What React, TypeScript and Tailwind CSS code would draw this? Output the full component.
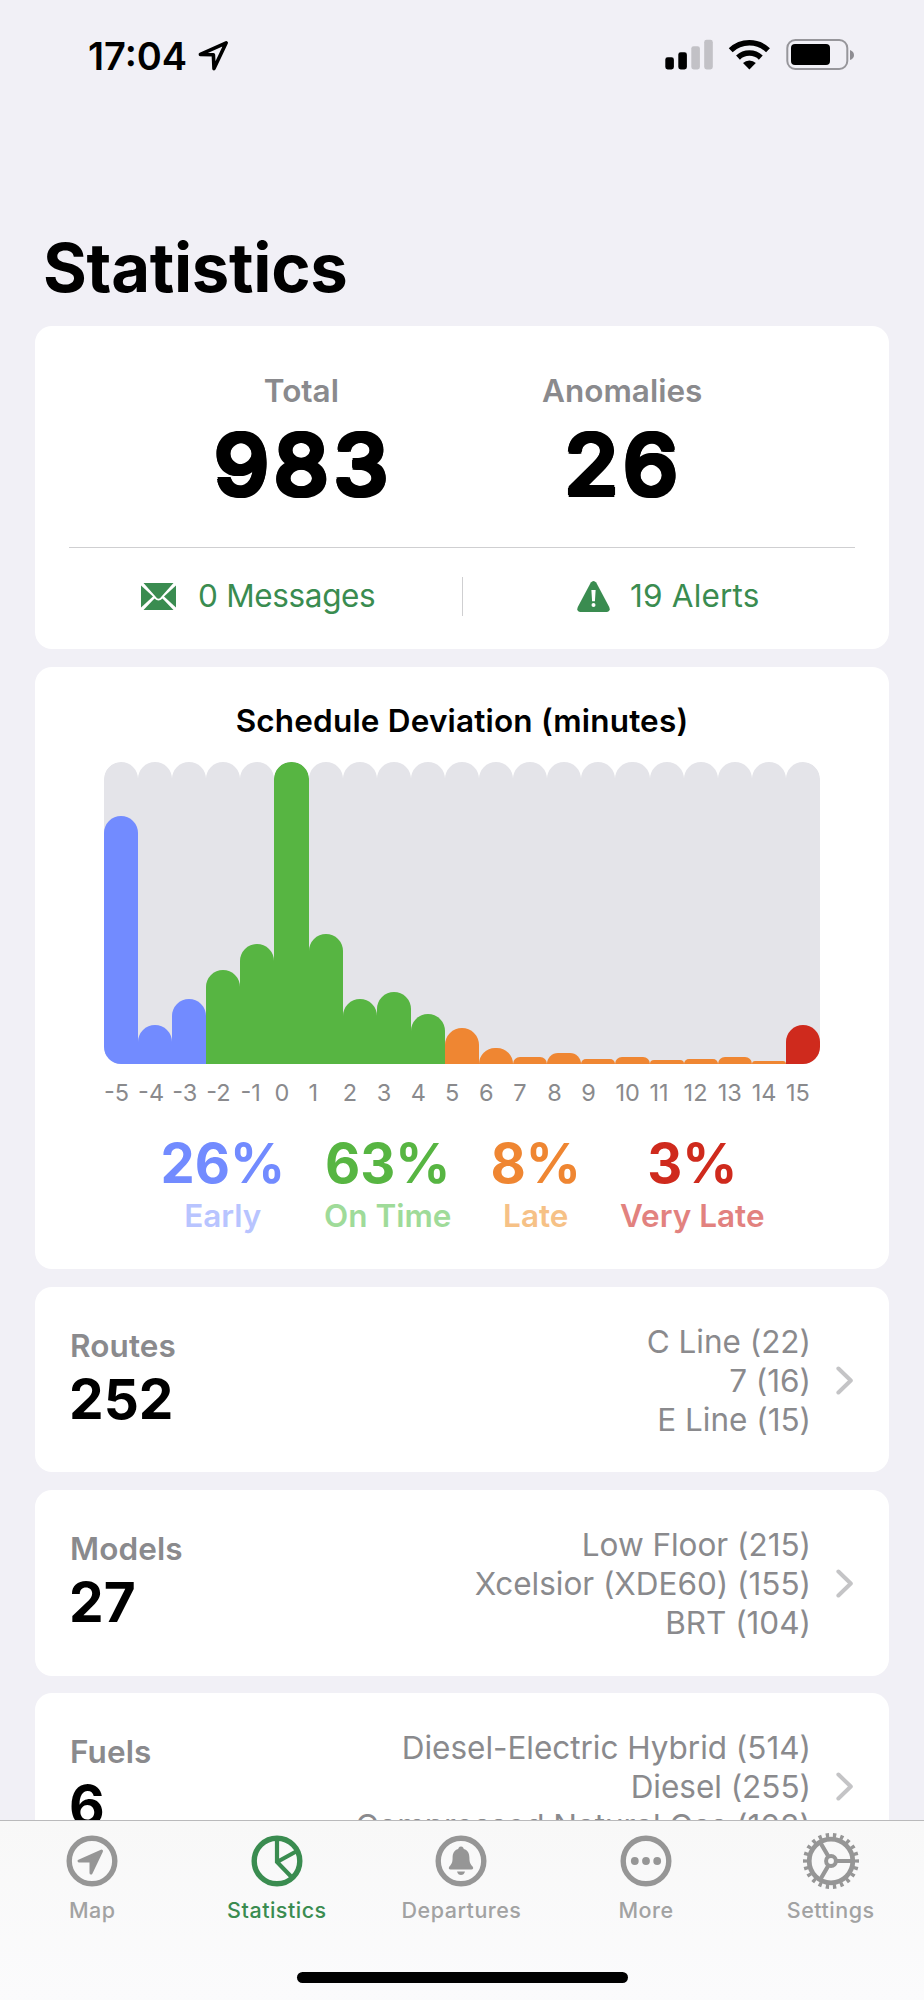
import type { ReactNode } from 'react';

type Bar = { label: string; height: number; color: string };

const EARLY = 'bg-[#728bff]';
const ON_TIME = 'bg-[#57b542]';
const LATE = 'bg-[#ef8632]';
const VERY_LATE = 'bg-[#cf2a1d]';

const bars: Bar[] = [
	{ label: '-5', height: 248, color: EARLY },
	{ label: '-4', height: 39, color: EARLY },
	{ label: '-3', height: 65, color: EARLY },
	{ label: '-2', height: 94, color: ON_TIME },
	{ label: '-1', height: 120, color: ON_TIME },
	{ label: '0', height: 302, color: ON_TIME },
	{ label: '1', height: 130, color: ON_TIME },
	{ label: '2', height: 65, color: ON_TIME },
	{ label: '3', height: 72, color: ON_TIME },
	{ label: '4', height: 50, color: ON_TIME },
	{ label: '5', height: 36, color: LATE },
	{ label: '6', height: 15.7, color: LATE },
	{ label: '7', height: 6.7, color: LATE },
	{ label: '8', height: 11.3, color: LATE },
	{ label: '9', height: 5.3, color: LATE },
	{ label: '10', height: 6.7, color: LATE },
	{ label: '11', height: 4, color: LATE },
	{ label: '12', height: 5.3, color: LATE },
	{ label: '13', height: 6.7, color: LATE },
	{ label: '14', height: 2.7, color: LATE },
	{ label: '15', height: 39, color: VERY_LATE },
];

const lists = [
	{
		title: 'Routes',
		count: '252',
		items: ['C Line (22)', '7 (16)', 'E Line (15)'],
	},
	{
		title: 'Models',
		count: '27',
		items: ['Low Floor (215)', 'Xcelsior (XDE60) (155)', 'BRT (104)'],
	},
	{
		title: 'Fuels',
		count: '6',
		items: [
			'Diesel-Electric Hybrid (514)',
			'Diesel (255)',
			'Compressed Natural Gas (108)',
		],
	},
];

function StatusBar() {
	return (
		<div className="flex h-[110px] shrink-0 items-start justify-between pl-[88px] pr-[69px]">
			<div className="flex items-start">
				<span className="mt-[32px] text-[38px] leading-[48px] font-semibold">
					17:04
				</span>
				<svg
					className="mt-[40px] ml-[11px] h-[31px] w-[31px]"
					viewBox="0 0 31 31"
					fill="none"
					stroke="currentColor"
					strokeWidth="3.6"
					strokeLinejoin="round"
				>
					<path d="M28.2 2.8L2.4 14.4L15.4 14.8L16 28.6Z" />
				</svg>
			</div>
			<svg
				className="mt-[38px] h-[34px] w-[190px]"
				viewBox="665 38 190 34"
			>
				<rect x="665.3" y="57.3" width="8.6" height="12.2" rx="2.4" />
				<rect x="678.3" y="52.3" width="8.6" height="17.2" rx="2.4" />
				<rect x="691.3" y="46.2" width="8.6" height="23.3" rx="2.4" fill="#c2c1c6" />
				<rect x="704.2" y="39.8" width="8.6" height="29.7" rx="2.4" fill="#c2c1c6" />
				<path
					d="M730.7 50.2A27 27 0 0 1 768 50.2"
					fill="none"
					stroke="#000"
					strokeWidth="5.6"
				/>
				<path
					d="M738 57.6A16.6 16.6 0 0 1 760.8 57.6"
					fill="none"
					stroke="#000"
					strokeWidth="5.6"
				/>
				<path d="M749.4 69.4L743 63A9.2 9.2 0 0 1 755.8 63Z" />
				<rect
					x="787.3"
					y="40"
					width="60"
					height="29"
					rx="8"
					fill="none"
					stroke="#97969b"
					strokeWidth="2"
				/>
				<rect x="791" y="44" width="39" height="21" rx="4" />
				<path d="M850 50Q854 51.5 854 55T850 60Z" fill="#8e8d92" />
			</svg>
		</div>
	);
}

function Total({ label, value }: { label: string; value: string }) {
	return (
		<div className="flex flex-col items-center">
			<span className="pr-[3px] text-[31.5px] leading-[40px] font-semibold text-[#8a8a8d]">
				{label}
			</span>
			<span className="mt-[4px] scale-x-[1.05] text-[84px] leading-[100px] font-medium tracking-[4px] [text-shadow:2.2px_0_0_#000,-2.2px_0_0_#000,0_2.2px_0_#000,0_-2.2px_0_#000,1.6px_1.6px_0_#000,-1.6px_1.6px_0_#000,1.6px_-1.6px_0_#000,-1.6px_-1.6px_0_#000]">
				{value}
			</span>
		</div>
	);
}

function TotalsCard() {
	return (
		<div className="h-[323.3px] shrink-0 rounded-[17px] bg-white px-[34px]">
			<div className="flex h-[221px] justify-center gap-[154px] pt-[45px] pr-px">
				<Total label="Total" value="983" />
				<Total label="Anomalies" value="26" />
			</div>
			<div className="grid h-[102px] grid-cols-[1fr_1px_1fr] items-center border-t border-[#cfcfd1] pb-[5px] text-[#3a8c50]">
				<div className="flex items-center justify-center pr-[14px]">
					<svg className="h-[27px] w-[35px]" viewBox="0 0 35 27" fill="currentColor">
						<path d="M2.5 0H32.5L20.5 13.5Q17.5 18 14.5 13.5Z" />
						<path d="M0 2.5L12 13.5L0 24.5Z" />
						<path d="M35 2.5L23 13.5L35 24.5Z" />
						<path d="M2.5 27L13.5 15.6Q17.5 19.5 21.5 15.6L32.5 27Z" />
					</svg>
					<span className="ml-[22px] text-[31.5px] leading-[40px] tracking-[-0.35px]">
						0 Messages
					</span>
				</div>
				<div className="h-[39px] bg-[#cfcfd1]"></div>
				<div className="flex items-center justify-center pl-[19px]">
					<svg className="h-[31px] w-[33px]" viewBox="0 0 33 31">
						<path
							d="M13.8 1.6Q16.5 -1.4 19.2 1.6L32.2 26Q34 30.4 29.6 31H3.4Q-1 30.4 .8 26Z"
							fill="currentColor"
						/>
						<path d="M14.4 9H18.6L17.9 20.3H15.1Z" fill="#fff" />
						<circle cx="16.5" cy="24" r="2" fill="#fff" />
					</svg>
					<span className="ml-[20px] text-[31.5px] leading-[40px] tracking-[0.2px]">
						19 Alerts
					</span>
				</div>
			</div>
		</div>
	);
}

function Share({
	value,
	label,
	valueColor,
	labelColor,
}: {
	value: string;
	label: string;
	valueColor: string;
	labelColor: string;
}) {
	return (
		<div className="flex flex-col items-center">
			<span className={`text-[54.3px] leading-[64px] font-bold ${valueColor}`}>
				{value}
			</span>
			<span className={`mt-px text-[31.5px] leading-[40px] font-semibold ${labelColor}`}>
				{label}
			</span>
		</div>
	);
}

function DeviationCard() {
	return (
		<div className="flex h-[602.6px] shrink-0 flex-col items-center rounded-[17px] bg-white pt-[34px]">
			<h2 className="text-[31.5px] leading-[40px] font-semibold tracking-[0.18px]">
				Schedule Deviation (minutes)
			</h2>
			<div className="mt-[21px] flex h-[302px] w-[716px] overflow-hidden rounded-[17px]">
				{bars.map((bar) => (
					<div
						key={bar.label}
						className="flex flex-1 items-end overflow-hidden rounded-t-[17px] bg-[#e4e4e9]"
					>
						<div
							className={`w-full rounded-t-[17px] ${bar.color}`}
							style={{ height: bar.height }}
						></div>
					</div>
				))}
			</div>
			<div className="mt-[14px] flex w-[716px] text-[23.5px] leading-[30px] text-[#8a8a8d]">
				{bars.map((bar) => (
					<span key={bar.label} className="w-0 flex-1 whitespace-nowrap">
						{bar.label}
					</span>
				))}
			</div>
			<div className="mt-[23px] flex gap-[39px] pl-px">
				<Share
					value="26%"
					label="Early"
					valueColor="text-[#728bff]"
					labelColor="text-[#b8c4ff]"
				/>
				<Share
					value="63%"
					label="On Time"
					valueColor="text-[#57b542]"
					labelColor="text-[#9fdb99]"
				/>
				<Share
					value="8%"
					label="Late"
					valueColor="text-[#ef8632]"
					labelColor="text-[#f6c186]"
				/>
				<Share
					value="3%"
					label="Very Late"
					valueColor="text-[#cf2a1d]"
					labelColor="text-[#e2827f]"
				/>
			</div>
		</div>
	);
}

function ListCard({
	title,
	count,
	items,
}: {
	title: string;
	count: string;
	items: string[];
}) {
	return (
		<div className="flex h-[185.6px] shrink-0 rounded-[17px] bg-white pr-[35px] pl-[34px]">
			<div className="flex flex-col pt-[39px]">
				<span className="pl-px text-[31.5px] leading-[40px] font-semibold tracking-[0.1px] text-[#8a8a8d]">
					{title}
				</span>
				<span className="text-[55px] leading-[66px] font-bold">{count}</span>
			</div>
			<div className="ml-auto pt-[35.4px] text-right text-[31.5px] leading-[39px] tracking-[-0.03px] text-[#8a8a8d]">
				{items.map((item) => (
					<div key={item}>{item}</div>
				))}
			</div>
			<svg
				className="mt-[79px] ml-[25px] h-[29px] w-[18px]"
				viewBox="0 0 18 29"
				fill="none"
				stroke="#c4c4c6"
				strokeWidth="4"
				strokeLinecap="round"
				strokeLinejoin="round"
			>
				<path d="M2.4 2.5L14.8 14.5L2.4 26.5" />
			</svg>
		</div>
	);
}

function Tab({
	label,
	active = false,
	children,
}: {
	label: string;
	active?: boolean;
	children: ReactNode;
}) {
	return (
		<div
			className={`flex flex-1 flex-col items-center ${active ? 'text-[#3a8c50]' : 'text-[#969696]'}`}
		>
			<svg
				className="mt-[11px] h-[58px] w-[58px]"
				viewBox="-29 -29 58 58"
				fill="none"
				stroke="currentColor"
			>
				{children}
			</svg>
			<span
				className={`mt-[6px] text-[21.5px] leading-[28px] font-medium tracking-[0.5px] ${active ? '' : 'text-[#a2a2a2]'}`}
			>
				{label}
			</span>
		</div>
	);
}

function Ring() {
	return <circle r="22.8" strokeWidth="5.4" />;
}

function TabBar() {
	return (
		<div className="h-[180px] w-full shrink-0 border-t border-[#b9b9bb] bg-linear-to-b from-[#f8f8f8] to-[#fbfbfc]">
			<div className="flex h-[151px] w-[923px]">
				<Tab label="Map">
					<Ring />
					<path
						d="M9.5 -10L-13 0H-1V12Z"
						fill="currentColor"
						strokeWidth="3"
						strokeLinejoin="round"
					/>
				</Tab>
				<Tab label="Statistics" active>
					<Ring />
					<path d="M0 -22V1L16 17.5M0 1L20 -10" strokeWidth="4.2" />
				</Tab>
				<Tab label="Departures">
					<Ring />
					<path
						d="M0 -14.5C-2 -14.5 -2.6 -13 -2.8 -12C-7 -10.8 -8.4 -7.4 -8.4 -3.4C-8.4 2 -9.6 3.4 -11.6 5.6C-12.8 7.2 -12.2 8.6 -10.4 8.6H10.4C12.2 8.6 12.8 7.2 11.6 5.6C9.6 3.4 8.4 2 8.4 -3.4C8.4 -7.4 7 -10.8 2.8 -12C2.6 -13 2 -14.5 0 -14.5ZM-4 10.5H4Q3 14 0 14T-4 10.5Z"
						fill="currentColor"
						stroke="none"
					/>
				</Tab>
				<Tab label="More">
					<Ring />
					<g fill="currentColor" stroke="none">
						<circle cx="-11.2" r="3.9" />
						<circle r="3.9" />
						<circle cx="11.2" r="3.9" />
					</g>
				</Tab>
				<Tab label="Settings">
					<circle r="21.8" strokeWidth="4.8" />
					<circle
						r="25.8"
						strokeWidth="4.4"
						pathLength="220"
						strokeDasharray="4.6 5.4"
						strokeDashoffset="2.3"
					/>
					<circle r="4.9" strokeWidth="4" />
					<path
						d="M6 0H20M-3 -5.2L-10 -17.3M-3 5.2L-10 17.3"
						strokeWidth="4.2"
					/>
				</Tab>
			</div>
			<div className="mx-auto h-[11px] w-[331px] rounded-full bg-black"></div>
		</div>
	);
}

export default function App() {
	return (
		<div className="flex h-[2000px] w-[924px] flex-col overflow-hidden bg-[#f1f0f6] font-['Inter',sans-serif] text-black">
			<StatusBar />
			<div className="flex min-h-0 flex-1 flex-col gap-[17.5px] overflow-hidden px-[35px]">
				<h1 className="mb-[-17.5px] h-[216px] shrink-0 pt-[118px] pl-[8px] text-[67px] leading-[80px] font-bold tracking-[-0.3px]">
					Statistics
				</h1>
				<TotalsCard />
				<DeviationCard />
				{lists.map((list) => (
					<ListCard key={list.title} {...list} />
				))}
			</div>
			<TabBar />
		</div>
	);
}
